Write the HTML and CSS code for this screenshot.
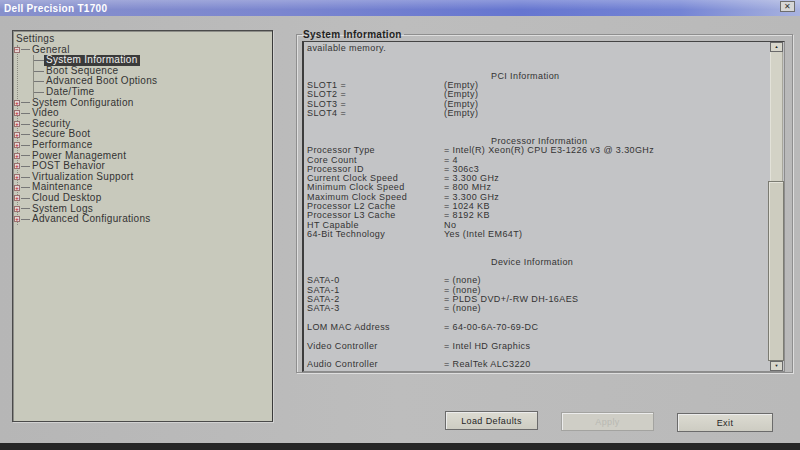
FILE: index.html
```html
<!DOCTYPE html>
<html lang="en">
  <head>
    <meta charset="UTF-8">
    <meta name="viewport" content="width=device-width, initial-scale=1.0">
    <title>Dell Precision T1700</title>
    <link rel="stylesheet" href="styles.css">
  </head>
  <body>
    <div class="window">
      <div class="titlebar">
        <span class="title">Dell Precision T1700</span>
        <span class="close">&#x2715;</span>
      </div>

      <div class="main">
        <div class="tree">
          <div class="root">Settings</div>
          <ul class="nodes">
            <li class="node"><span class="box">&minus;</span><span class="dash"></span>General</li>
            <li>
              <ul class="leaves">
                <li><span class="dash"></span><span class="sel">System Information</span></li>
                <li><span class="dash"></span><span class="leaf">Boot Sequence</span></li>
                <li><span class="dash"></span><span class="leaf">Advanced Boot Options</span></li>
                <li><span class="dash"></span><span class="leaf">Date/Time</span></li>
              </ul>
            </li>
            <li class="node"><span class="box">+</span><span class="dash"></span>System Configuration</li>
            <li class="node"><span class="box">+</span><span class="dash"></span>Video</li>
            <li class="node"><span class="box">+</span><span class="dash"></span>Security</li>
            <li class="node"><span class="box">+</span><span class="dash"></span>Secure Boot</li>
            <li class="node"><span class="box">+</span><span class="dash"></span>Performance</li>
            <li class="node"><span class="box">+</span><span class="dash"></span>Power Management</li>
            <li class="node"><span class="box">+</span><span class="dash"></span>POST Behavior</li>
            <li class="node"><span class="box">+</span><span class="dash"></span>Virtualization Support</li>
            <li class="node"><span class="box">+</span><span class="dash"></span>Maintenance</li>
            <li class="node"><span class="box">+</span><span class="dash"></span>Cloud Desktop</li>
            <li class="node"><span class="box">+</span><span class="dash"></span>System Logs</li>
            <li class="node"><span class="box">+</span><span class="dash"></span>Advanced Configurations</li>
          </ul>
        </div>

        <div class="side">
          <fieldset class="group">
            <legend>System Information</legend>
            <div class="infobox">
              <div class="lines">
                <div class="row">available memory.</div>
                <div class="row"></div>
                <div class="row"></div>
                <div class="row head">PCI Information</div>
                <div class="row"><span class="key">SLOT1 =</span><span>(Empty)</span></div>
                <div class="row"><span class="key">SLOT2 =</span><span>(Empty)</span></div>
                <div class="row"><span class="key">SLOT3 =</span><span>(Empty)</span></div>
                <div class="row"><span class="key">SLOT4 =</span><span>(Empty)</span></div>
                <div class="row"></div>
                <div class="row"></div>
                <div class="row head">Processor Information</div>
                <div class="row"><span class="key">Processor Type</span><span>= Intel(R) Xeon(R) CPU E3-1226 v3 @ 3.30GHz</span></div>
                <div class="row"><span class="key">Core Count</span><span>= 4</span></div>
                <div class="row"><span class="key">Processor ID</span><span>= 306c3</span></div>
                <div class="row"><span class="key">Current Clock Speed</span><span>= 3.300 GHz</span></div>
                <div class="row"><span class="key">Minimum Clock Speed</span><span>= 800 MHz</span></div>
                <div class="row"><span class="key">Maximum Clock Speed</span><span>= 3.300 GHz</span></div>
                <div class="row"><span class="key">Processor L2 Cache</span><span>= 1024 KB</span></div>
                <div class="row"><span class="key">Processor L3 Cache</span><span>= 8192 KB</span></div>
                <div class="row"><span class="key">HT Capable</span><span>No</span></div>
                <div class="row"><span class="key">64-Bit Technology</span><span>Yes (Intel EM64T)</span></div>
                <div class="row"></div>
                <div class="row"></div>
                <div class="row head">Device Information</div>
                <div class="row"></div>
                <div class="row"><span class="key">SATA-0</span><span>= (none)</span></div>
                <div class="row"><span class="key">SATA-1</span><span>= (none)</span></div>
                <div class="row"><span class="key">SATA-2</span><span>= PLDS DVD+/-RW DH-16AES</span></div>
                <div class="row"><span class="key">SATA-3</span><span>= (none)</span></div>
                <div class="row"></div>
                <div class="row"><span class="key">LOM MAC Address</span><span>= 64-00-6A-70-69-DC</span></div>
                <div class="row"></div>
                <div class="row"><span class="key">Video Controller</span><span>= Intel HD Graphics</span></div>
                <div class="row"></div>
                <div class="row"><span class="key">Audio Controller</span><span>= RealTek ALC3220</span></div>
              </div>
              <div class="scrollbar">
                <span class="arrow">&#9650;</span>
                <div class="track">
                  <div class="thumb"></div>
                </div>
                <span class="arrow">&#9660;</span>
              </div>
            </div>
          </fieldset>

          <div class="buttons">
            <button class="btn">Load Defaults</button>
            <button class="btn off">Apply</button>
            <button class="btn exit">Exit</button>
          </div>
        </div>
      </div>
    </div>
  </body>
</html>
```

FILE: styles.css
```css
*{
    margin: 0;
    padding: 0;
    box-sizing: border-box;
}

body{
    background: #262626;
    font-family: "Liberation Sans", Arial, sans-serif;
    color: #2e2e2e;
}

.window{
    width: 800px;
    height: 443px;
    background: linear-gradient(90deg, #b6b6b6, #bdbdbd 50%, #b9b9b9);
}

/* title bar */
.titlebar{
    height: 16px;
    display: flex;
    align-items: center;
    justify-content: space-between;
    padding: 0 5px 0 4px;
    background:
        linear-gradient(180deg, rgba(255,255,255,0.25), rgba(255,255,255,0) 60%),
        linear-gradient(90deg, #8790cc 0%, #7b86cf 35%, #6676d0 65%, #7484d4 85%, #a9b3df 100%);
}

.title{
    color: #fff;
    font-weight: bold;
    font-size: 10px;
    letter-spacing: 0.3px;
}

.close{
    width: 15px;
    height: 11px;
    margin-top: -3px;
    border: 1px solid #6d6d6d;
    background: #d6d6d6;
    color: #333;
    font-size: 8px;
    line-height: 9px;
    text-align: center;
}

.main{
    display: flex;
    padding: 14px 0 0 12px;
}

/* left tree */
.tree{
    width: 261px;
    height: 392px;
    background: #c8c9bc;
    border: 1px solid #4a4a4a;
    border-right-color: #3a3a3a;
    box-shadow: inset 1px 1px 0 #8d8d88, 1px 1px 0 #d2d2d2;
    padding: 3px 0 0 3px;
    font-size: 10px;
    line-height: 10.6px;
    letter-spacing: 0.3px;
    color: #333;
}

.nodes{
    list-style: none;
    margin-left: 1px;
    border-left: 1px dotted #8a8a80;
}

.node{
    display: flex;
    align-items: center;
    height: 10.6px;
}

.box{
    width: 6px;
    height: 6px;
    margin-left: -4px;
    border: 1px solid #9a7070;
    background: #e6d8d6;
    color: #c01830;
    font-size: 6px;
    line-height: 4px;
    font-weight: bold;
    text-align: center;
    letter-spacing: 0;
}

.dash{
    display: inline-block;
    width: 9px;
    height: 0;
    border-top: 1px solid #777;
    margin: 0 2px 0 1px;
}

.leaves{
    list-style: none;
    margin-left: 15px;
    border-left: 1px solid #8a8a80;
}

.leaves li{
    display: flex;
    align-items: center;
    height: 10.6px;
}

.leaves .dash{
    width: 10px;
    margin: 0;
}

.leaf{
    padding-left: 2px;
}

.sel{
    background: #3a3a3a;
    color: #f0f0f0;
    padding: 0 2px;
}

/* right side */
.side{
    margin-left: 23px;
    width: 497px;
    display: flex;
    flex-direction: column;
}

.group{
    height: 344px;
    margin-top: -1px;
    border: 1px solid #8e8e8e;
    box-shadow: 1px 1px 0 #dedede, inset 1px 1px 0 #dedede;
    padding: 1px 7px 4px 5px;
}

.group legend{
    font-size: 10px;
    font-weight: bold;
    color: #1f1f1f;
    letter-spacing: 0.3px;
    padding: 0 2px 0 1px;
}

.infobox{
    display: flex;
    height: 331px;
    background: #c3c4c6;
    border: 1px solid #8c8c8c;
    border-left: 2px solid #3c3c3c;
    border-top: 1px solid #444;
}

.lines{
    flex: 1;
    padding: 2px 0 0 3px;
    font-size: 9px;
    line-height: 9.3px;
    letter-spacing: 0.4px;
    color: #333;
    overflow: hidden;
}

.row{
    display: flex;
    height: 9.3px;
    white-space: nowrap;
}

.key{
    width: 137px;
}

.head{
    padding-left: 184px;
}

.scrollbar{
    width: 13px;
    margin: 0 1px 0 0;
    display: flex;
    flex-direction: column;
}

.arrow{
    height: 10px;
    border: 1px solid #6a6a6a;
    background: #d8d7cc;
    font-size: 4px;
    line-height: 8px;
    text-align: center;
    color: #222;
}

.track{
    flex: 1;
    display: flex;
    flex-direction: column;
    justify-content: flex-end;
    background: #d3d2c6;
    border-left: 1px solid #e2e1d8;
    border-right: 1px solid #a8a79c;
}

.thumb{
    height: 180px;
    margin: 0 -2px 0 -3px;
    background: #cdccbf;
    border: 1px solid #7b7b72;
    box-shadow: inset 1px 1px 0 #e4e3da;
}

/* buttons */
.buttons{
    display: flex;
    gap: 23px;
    margin-top: 38px;
    padding-left: 149px;
    align-items: flex-start;
}

.btn{
    width: 93px;
    height: 19px;
    border: 1px solid #6b6b6b;
    background: linear-gradient(180deg, #dcdbd2, #cdccc2);
    box-shadow: inset 1px 1px 0 #ececec;
    font-family: "Liberation Sans", Arial, sans-serif;
    font-size: 9px;
    letter-spacing: 0.4px;
    color: #262626;
}

.btn.off{
    margin-top: 1px;
    border-color: #a3a3a0;
    color: #b9b9b3;
    background: #cfcec6;
}

.btn.exit{
    width: 96px;
    margin-top: 2px;
}
```
